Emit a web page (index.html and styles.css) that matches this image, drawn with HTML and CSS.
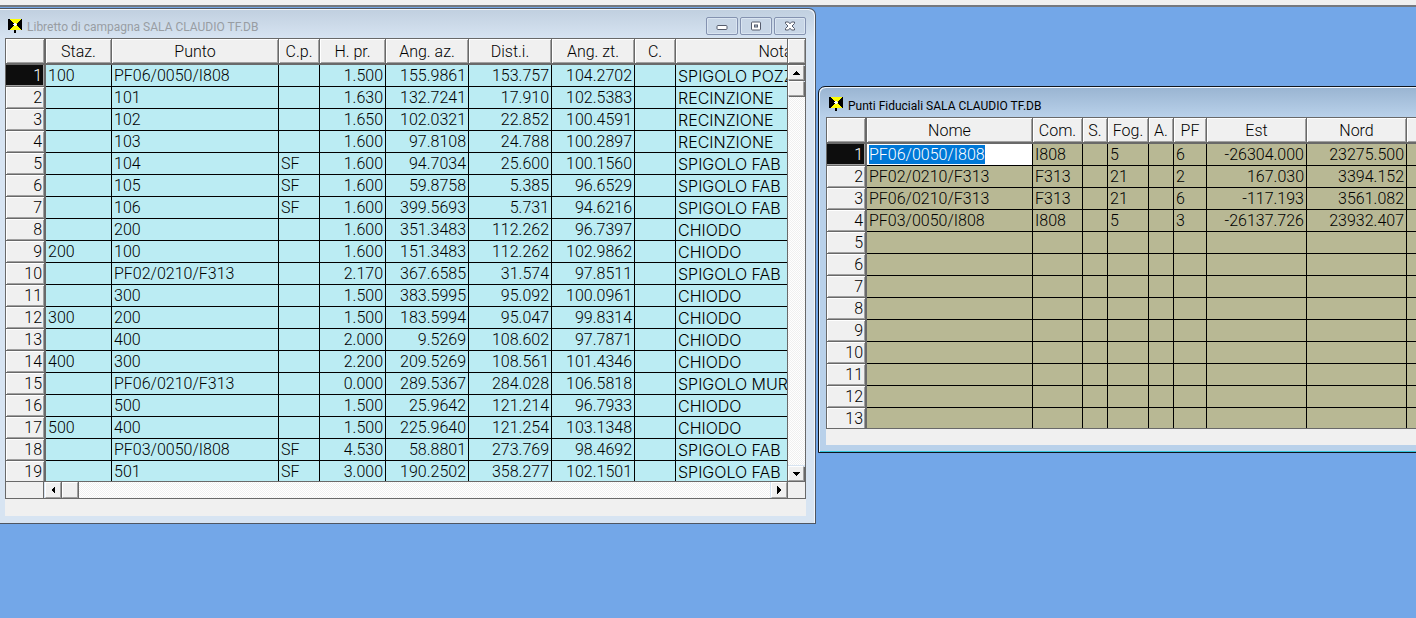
FILE: index.html
```html
<!DOCTYPE html>
<html lang="it">
<head>
<meta charset="utf-8">
<title>Libretto di campagna</title>
<link rel="stylesheet" href="styles.css">
</head>
<body>
<div class="toolbar-edge"></div>
<main class="desktop">
  <section class="window window-book" aria-label="Libretto di campagna">
    <header class="titlebar">
      <svg class="app-icon" viewBox="0 0 14 14" aria-hidden="true"><path fill="#ff0" d="M0 0h14v11H0z"/><path d="M0 0h1l5 5v1l-5 5H0zM14 0h-1L8 5v1l5 5h1zM6 11h2v3H6z"/><path fill="#fff" d="M5 5h4v1H5zM6 4h2v3H6z"/></svg>
      <h1 class="title">Libretto di campagna SALA CLAUDIO TF.DB</h1>
      <div class="window-buttons">
        <button class="window-button" type="button" aria-label="Riduci a icona"><svg viewBox="0 0 12 10"><rect x="1" y="4.500" width="10" height="4" rx="1" fill="#fff" stroke="#565c6c"/></svg></button>
        <button class="window-button" type="button" aria-label="Ingrandisci"><svg viewBox="0 0 12 10"><rect x="1.500" y="1" width="9" height="8" rx="1" fill="#fff" stroke="#565c6c"/><rect x="4.500" y="4" width="3" height="2" fill="#b4c6dc" stroke="#565c6c"/></svg></button>
        <button class="window-button" type="button" aria-label="Chiudi"><svg viewBox="0 0 12 10"><path d="M1.500 1h3L6 2.800 7.500 1h3v1.500L8 5l2.500 2.500V9h-3L6 7.200 4.500 9h-3V7.500L4 5 1.500 2.500z" fill="#fff" stroke="#565c6c"/></svg></button>
      </div>
    </header>
    <div class="client">
      <div class="grid-frame">
        <div class="viewport">
          <table class="grid grid-book">
            <colgroup><col class="w-head"><col class="w66"><col class="w167"><col class="w41"><col class="w66"><col class="w83"><col class="w83"><col class="w83"><col class="w41"><col class="w200"></colgroup>
            <thead><tr><th></th><th>Staz.</th><th>Punto</th><th>C.p.</th><th>H. pr.</th><th>Ang. az.</th><th>Dist.i.</th><th>Ang. zt.</th><th>C.</th><th>Nota</th></tr></thead>
            <tbody id="book-rows"></tbody>
          </table>
        </div>
        <div class="v-side">
          <div class="corner-top"></div>
          <div class="v-scroll">
            <button class="scroll-button" type="button" aria-label="Su"><svg viewBox="0 0 8 4"><path d="M4 0l4 4H0z"/></svg></button>
            <div class="thumb"></div>
            <div class="track"></div>
            <button class="scroll-button" type="button" aria-label="Giù"><svg viewBox="0 0 8 4"><path d="M0 0h8L4 4z"/></svg></button>
          </div>
        </div>
        <div class="h-side">
          <div class="h-corner"></div>
          <button class="scroll-button" type="button" aria-label="Sinistra"><svg class="tall" viewBox="0 0 4 8"><path d="M4 0v8L0 4z"/></svg></button>
          <div class="thumb"></div>
          <div class="track"></div>
          <button class="scroll-button" type="button" aria-label="Destra"><svg class="tall" viewBox="0 0 4 8"><path d="M0 0v8l4-4z"/></svg></button>
        </div>
        <div class="corner-bottom"></div>
      </div>
      <div class="status"></div>
    </div>
  </section>

  <section class="window window-points" aria-label="Punti Fiduciali">
    <header class="titlebar">
      <svg class="app-icon" viewBox="0 0 14 14" aria-hidden="true"><path fill="#ff0" d="M0 0h14v11H0z"/><path d="M0 0h1l5 5v1l-5 5H0zM14 0h-1L8 5v1l5 5h1zM6 11h2v3H6z"/><path fill="#fff" d="M5 5h4v1H5zM6 4h2v3H6z"/></svg>
      <h1 class="title">Punti Fiduciali SALA CLAUDIO TF.DB</h1>
    </header>
    <div class="client">
      <div class="viewport viewport-points">
        <table class="grid grid-points">
          <colgroup><col class="w-head"><col class="w166"><col class="w50"><col class="w25"><col class="w41"><col class="w25"><col class="w33"><col class="w100"><col class="w100"><col class="w100"></colgroup>
          <thead><tr><th></th><th>Nome</th><th>Com.</th><th>S.</th><th>Fog.</th><th>A.</th><th>PF</th><th>Est</th><th>Nord</th><th></th></tr></thead>
          <tbody id="point-rows"></tbody>
        </table>
      </div>
      <div class="status"></div>
    </div>
  </section>
</main>
<script src="app.js"></script>
</body>
</html>
```
FILE: styles.css
```css
* { box-sizing: border-box; }

body {
  margin: 0;
  height: 100vh;
  display: flex;
  flex-direction: column;
  overflow: hidden;
  background: #73a7e8;
  color: #000;
  font: 300 16px/20px Roboto, "Liberation Sans", sans-serif;
}

.toolbar-edge {
  height: 7px;
  flex: none;
  background: #f0f0f0;
  border-bottom: 2px solid #75797f;
}

.desktop { position: relative; flex: 1; overflow: hidden; }

.window { position: absolute; display: flex; flex-direction: column; }

.window-book {
  left: 0;
  top: 1px;
  width: 816px;
  padding: 0 9px 7px 5px;
  border: 1px solid #4f5661;
  border-left: 0;
  border-radius: 0 7px 0 0;
  background: linear-gradient(#c0cfdf, #d7e4f2 30px);
  box-shadow: inset -1px 1px #f2f6fb;
}

.window-points {
  left: 818px;
  top: 79px;
  width: 800px;
  padding: 0 7px 7px;
  border: 1px solid #10151c;
  border-radius: 7px 0 0 0;
  background: linear-gradient(#99b4d1, #b9d1ea 30px);
  box-shadow: inset 1px 1px #eef5fc, inset 0 -1px #35c5dc;
}

.titlebar { display: flex; align-items: center; height: 29px; padding: 0 0 0 3px; }
.window-points .titlebar { height: 30px; }

.app-icon { width: 14px; height: 14px; margin-top: 4px; flex: none; shape-rendering: crispEdges; }

.title {
  flex: 1;
  margin: 7px 0 0 5px;
  font: 400 12px/16px Roboto, sans-serif;
  white-space: nowrap;
}
.window-book .title { color: #989da3; }

.window-buttons { display: flex; gap: 2px; margin-top: 5px; }
.window-button {
  display: grid;
  place-items: center;
  width: 32px;
  height: 18px;
  padding: 0;
  border: 1px solid #8492b0;
  border-radius: 2px;
  background: #c8d6e6;
  box-shadow: inset 0 0 0 1px #dae5f1;
}
.window-button svg { width: 12px; height: 10px; }

.grid-frame {
  display: grid;
  grid-template-columns: minmax(0, 1fr) 19px;
  grid-template-rows: 443px 18px;
}

.viewport { overflow: hidden; border-top: 1px solid #696969; border-left: 1px solid #696969; }
.viewport-points { height: 312px; border-bottom: 1px solid #696969; }

.grid { width: max-content; table-layout: fixed; border-collapse: separate; border-spacing: 0; }
.w-head { width: 40px; }
.w25 { width: 25px; }
.w33 { width: 33px; }
.w41 { width: 41px; }
.w50 { width: 50px; }
.w66 { width: 66px; }
.w83 { width: 83px; }
.w100 { width: 100px; }
.w166 { width: 166px; }
.w167 { width: 167px; }
.w200 { width: 200px; }

.grid th, .grid td { padding: 0 2px; font-weight: 300; white-space: nowrap; overflow: hidden; }
.grid td { height: 22px; border-right: 1px solid #000; border-bottom: 1px solid #000; }
.grid thead th {
  height: 26px;
  padding-top: 2px;
  text-align: center;
  background: #f0f0f0;
  border-right: 1px solid #696969;
  border-bottom: 2px solid #696969;
  box-shadow: inset 1px 1px #fff, inset -1px -1px #a0a0a0;
}
.grid tbody th {
  height: 22px;
  padding-top: 1px;
  text-align: right;
  background: #f0f0f0;
  border-right: 2px solid #696969;
  border-bottom: 1px solid #696969;
  box-shadow: inset 1px 1px #fff, inset -1px -1px #a0a0a0;
}
.grid thead th:first-child { border-right-width: 2px; }
.grid tbody tr:first-child th { background: #0d0d0d; color: #fff; box-shadow: inset -1px -1px #a0a0a0; }

.grid-book td { background: #bbecf3; }
.grid-points td { background: #b8b894; }
.grid .num { text-align: right; }
.grid-book .note { font-family: Inter, Roboto, sans-serif; }

.grid .editing { padding: 0; background: #fff; }
.cell-input {
  display: block;
  width: 100%;
  height: 21px;
  padding: 0 2px;
  border: 0;
  outline: 0;
  background: #fff;
  color: #000;
  font: inherit;
}
.cell-input::selection { background: #0078d7; color: #fff; }

.v-side { display: flex; flex-direction: column; border-left: 1px solid #696969; border-right: 1px solid #696969; border-top: 1px solid #696969; }
.corner-top { height: 26px; background: #f0f0f0; border-bottom: 2px solid #696969; box-shadow: inset 1px 1px #fff, inset -1px -1px #a0a0a0; }
.v-scroll { flex: 1; display: flex; flex-direction: column; gap: 1px; }
.h-side { display: flex; gap: 1px; border: 1px solid #696969; border-right: 0; }
.h-corner { width: 38px; background: #f0f0f0; border-right: 1px solid #696969; }
.corner-bottom { background: #f0f0f0; border: 1px solid #696969; }

.scroll-button, .thumb {
  display: grid;
  place-items: center;
  flex: none;
  width: 16px;
  height: 15px;
  padding: 0;
  border: 1px solid;
  border-color: #fff #a0a0a0 #a0a0a0 #fff;
  background: #f0f0f0;
  box-shadow: 1px 1px #696969;
}
.h-side .scroll-button, .h-side .thumb { height: 16px; box-shadow: 1px 0 #696969; }
.scroll-button svg { width: 8px; height: 4px; shape-rendering: crispEdges; }
.scroll-button .tall { width: 4px; height: 8px; }
.track { flex: 1; background: repeating-conic-gradient(#f0f0f0 0 25%, #fff 0 50%) 0 0 / 2px 2px; }

.status { height: 17px; background: #f0f0f0; }
.window-points .status { height: 16px; }
```
FILE: app.js
```js
const bookRows = [
  ["100", "PF06/0050/I808", "", "1.500", "155.9861", "153.757", "104.2702", "", "SPIGOLO POZZ"],
  ["", "101", "", "1.630", "132.7241", "17.910", "102.5383", "", "RECINZIONE"],
  ["", "102", "", "1.650", "102.0321", "22.852", "100.4591", "", "RECINZIONE"],
  ["", "103", "", "1.600", "97.8108", "24.788", "100.2897", "", "RECINZIONE"],
  ["", "104", "SF", "1.600", "94.7034", "25.600", "100.1560", "", "SPIGOLO FAB"],
  ["", "105", "SF", "1.600", "59.8758", "5.385", "96.6529", "", "SPIGOLO FAB"],
  ["", "106", "SF", "1.600", "399.5693", "5.731", "94.6216", "", "SPIGOLO FAB"],
  ["", "200", "", "1.600", "351.3483", "112.262", "96.7397", "", "CHIODO"],
  ["200", "100", "", "1.600", "151.3483", "112.262", "102.9862", "", "CHIODO"],
  ["", "PF02/0210/F313", "", "2.170", "367.6585", "31.574", "97.8511", "", "SPIGOLO FAB"],
  ["", "300", "", "1.500", "383.5995", "95.092", "100.0961", "", "CHIODO"],
  ["300", "200", "", "1.500", "183.5994", "95.047", "99.8314", "", "CHIODO"],
  ["", "400", "", "2.000", "9.5269", "108.602", "97.7871", "", "CHIODO"],
  ["400", "300", "", "2.200", "209.5269", "108.561", "101.4346", "", "CHIODO"],
  ["", "PF06/0210/F313", "", "0.000", "289.5367", "284.028", "106.5818", "", "SPIGOLO MUR"],
  ["", "500", "", "1.500", "25.9642", "121.214", "96.7933", "", "CHIODO"],
  ["500", "400", "", "1.500", "225.9640", "121.254", "103.1348", "", "CHIODO"],
  ["", "PF03/0050/I808", "SF", "4.530", "58.8801", "273.769", "98.4692", "", "SPIGOLO FAB"],
  ["", "501", "SF", "3.000", "190.2502", "358.277", "102.1501", "", "SPIGOLO FAB"]
];

const pointRows = [
  ["PF06/0050/I808", "I808", "", "5", "", "6", "-26304.000", "23275.500", ""],
  ["PF02/0210/F313", "F313", "", "21", "", "2", "167.030", "3394.152", ""],
  ["PF06/0210/F313", "F313", "", "21", "", "6", "-117.193", "3561.082", ""],
  ["PF03/0050/I808", "I808", "", "5", "", "3", "-26137.726", "23932.407", ""]
];
while (pointRows.length < 13) pointRows.push(Array(9).fill(""));

function fill(id, rows, classes) {
  const body = document.getElementById(id);
  rows.forEach((cells, index) => {
    const tr = body.insertRow();
    const head = document.createElement("th");
    head.scope = "row";
    head.textContent = index + 1;
    tr.append(head);
    cells.forEach((text, column) => {
      const td = tr.insertCell();
      td.textContent = text;
      if (classes[column]) td.className = classes[column];
    });
  });
}

fill("book-rows", bookRows, { 3: "num", 4: "num", 5: "num", 6: "num", 8: "note" });
fill("point-rows", pointRows, { 6: "num", 7: "num" });

const cell = document.querySelector("#point-rows td");
const input = document.createElement("input");
input.type = "text";
input.className = "cell-input";
input.value = cell.textContent;
input.setAttribute("aria-label", "Nome");
cell.className = "editing";
cell.replaceChildren(input);
input.focus({ preventScroll: true });
input.select();
```
